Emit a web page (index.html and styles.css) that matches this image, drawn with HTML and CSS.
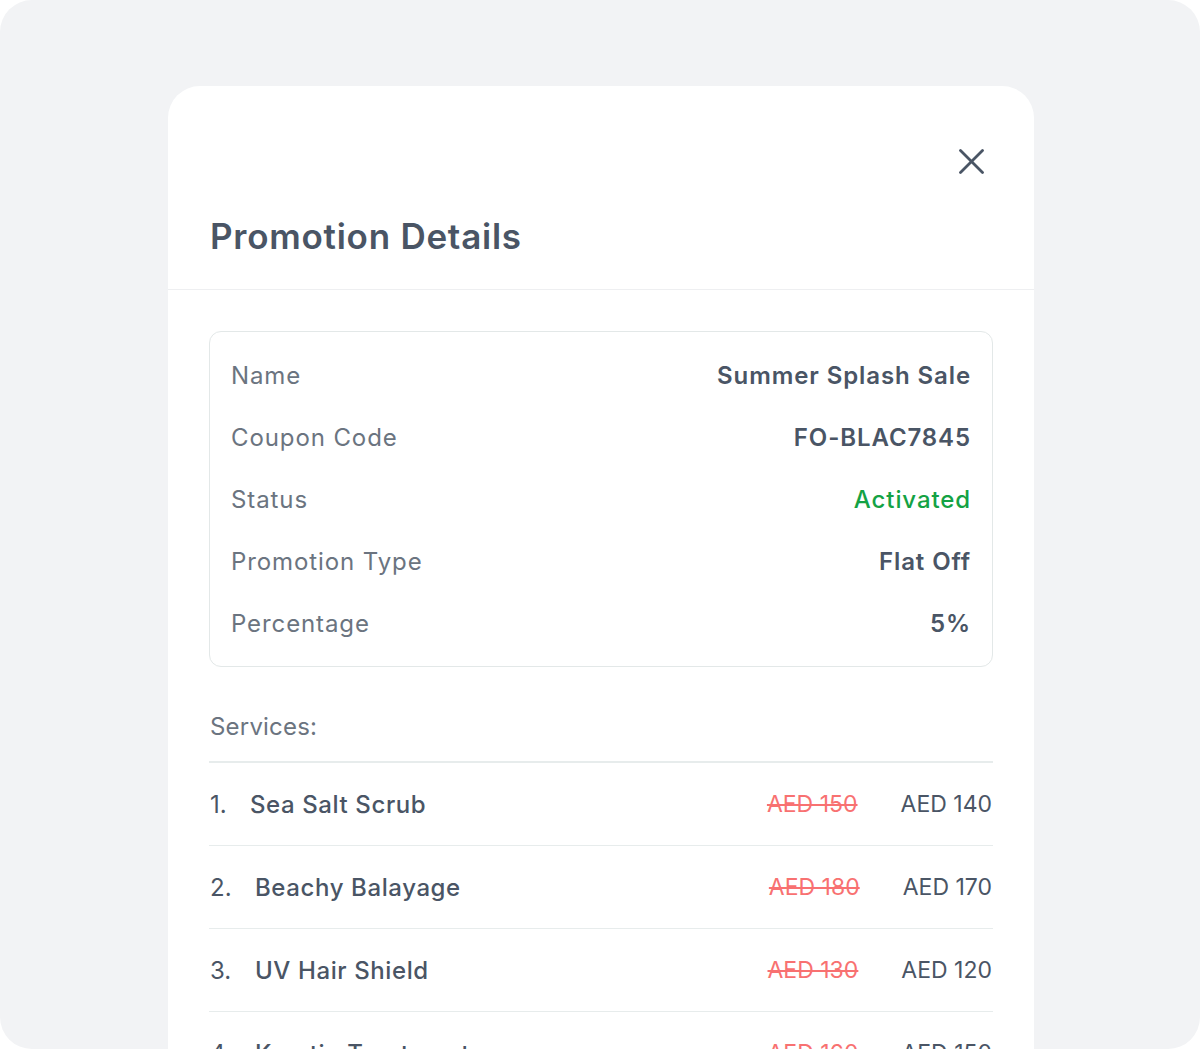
FILE: index.html
```html
<!DOCTYPE html>
<html lang="en">
<head>
<meta charset="utf-8">
<title>Promotion Details</title>
<link rel="stylesheet" href="styles.css">
</head>
<body>
<div class="screen">
  <div class="modal">
    <div class="modal-header">
      <div class="close-row">
        <button class="close-btn" aria-label="Close">
          <svg width="25" height="25" viewBox="0 0 25 25" fill="none" stroke="#4a5565" stroke-width="2.8" stroke-linecap="round">
            <path d="M1.5 1.5 L23.5 23.5"/>
            <path d="M23.5 1.5 L1.5 23.5"/>
          </svg>
        </button>
      </div>
      <h1 class="title">Promotion Details</h1>
    </div>
    <div class="modal-body">
      <div class="info-card">
        <div class="info-row"><span class="label">Name</span><span class="value">Summer Splash Sale</span></div>
        <div class="info-row"><span class="label">Coupon Code</span><span class="value">FO-BLAC7845</span></div>
        <div class="info-row"><span class="label">Status</span><span class="value green">Activated</span></div>
        <div class="info-row"><span class="label">Promotion Type</span><span class="value">Flat Off</span></div>
        <div class="info-row"><span class="label">Percentage</span><span class="value">5%</span></div>
      </div>
      <div class="services-title">Services:</div>
      <ol class="services">
        <li class="service"><span class="num">1.</span><span class="sname">Sea Salt Scrub</span><span class="old">AED 150</span><span class="new">AED 140</span></li>
        <li class="service"><span class="num">2.</span><span class="sname">Beachy Balayage</span><span class="old">AED 180</span><span class="new">AED 170</span></li>
        <li class="service"><span class="num">3.</span><span class="sname">UV Hair Shield</span><span class="old">AED 130</span><span class="new">AED 120</span></li>
        <li class="service"><span class="num">4.</span><span class="sname">Keratin Treatment</span><span class="old">AED 160</span><span class="new">AED 150</span></li>
      </ol>
    </div>
  </div>
</div>
</body>
</html>
```
FILE: styles.css
```css
* { box-sizing: border-box; }
html, body { margin: 0; padding: 0; background: #ffffff; }
body { font-family: "Inter", "Open Sans", sans-serif; color: #4a5565; }

.screen {
  width: 1200px;
  height: 1049px;
  background: #f2f3f5;
  border-radius: 32px;
  overflow: hidden;
  padding: 86px 166px 0 168px;
}

.modal {
  background: #ffffff;
  border-radius: 32px 32px 0 0;
  width: 866px;
  height: 1100px;
}

.modal-header {
  padding: 63px 41px 27px;
  border-bottom: 1.5px solid #eeeff1;
}
.close-row { display: flex; justify-content: flex-end; height: 25px; }
.close-btn { background: none; border: 0; padding: 0; margin-right: 9px; width: 25px; height: 25px; display: block; cursor: pointer; }
.close-btn svg { display: block; }

.title {
  margin: 37px 0 0 1px;
  font-size: 35px;
  line-height: 51px;
  font-weight: 600;
  color: #4a5565;
  letter-spacing: 0.75px;
}

.modal-body { padding: 41px 41px 0; }

.info-card {
  border: 1px solid #e3e8e8;
  border-radius: 12px;
  padding: 12px 21px;
}
.info-row {
  height: 62px;
  display: flex;
  align-items: center;
  justify-content: space-between;
}
.label { font-size: 24px; color: #6b7480; font-weight: 400; letter-spacing: 0.9px; }
.value { font-size: 24px; color: #4a5565; font-weight: 600; letter-spacing: 0.9px; }
.value.green { color: #14a244; font-weight: 500; }

.services-title {
  margin-top: 44px;
  font-size: 24px;
  line-height: 32px;
  color: #6b7480;
  padding-bottom: 18px;
  border-bottom: 2px solid #e7ecec;
  padding-left: 1px;
  letter-spacing: 0.2px;
}

.services { list-style: none; margin: 0; padding: 0; }
.service {
  height: 83px;
  display: flex;
  align-items: center;
  border-bottom: 1.5px solid #e7ecec;
  font-size: 24px;
}
.num { color: #4a5565; margin-right: 27px; padding-left: 1px; width: 14px; white-space: nowrap; }
.service:nth-child(n+2) .num { width: 19px; }
.sname { color: #4a5565; font-weight: 500; flex: 1; letter-spacing: 0.6px; }
.old { color: #f87171; text-decoration: line-through; text-decoration-thickness: 2px; margin-right: 43px; font-size: 23px; }
.new { color: #4a5565; margin-right: 1px; font-size: 23px; }
```
